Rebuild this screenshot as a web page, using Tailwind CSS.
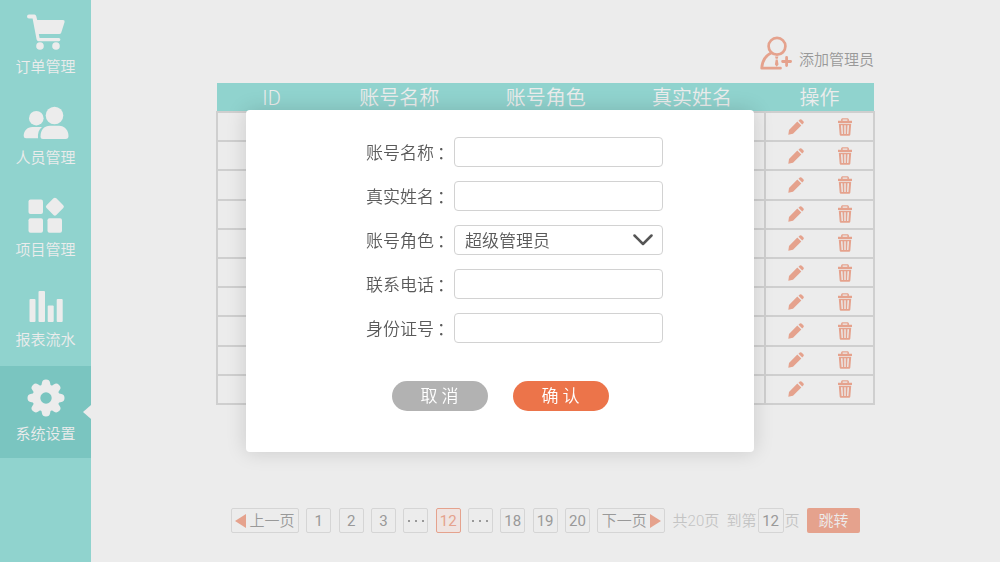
<!DOCTYPE html>
<html lang="zh-CN">
<head>
<meta charset="utf-8">
<meta name="viewport" content="width=device-width, initial-scale=1">
<title>系统设置</title>
<script src="https://cdn.jsdelivr.net/npm/@tailwindcss/browser@4"></script>
</head>
<body class="min-h-screen bg-[#ececec] font-['Roboto','Noto_Sans_CJK_SC',sans-serif] font-[350]">
<svg class="hidden" aria-hidden="true">
  <symbol id="pencil" viewBox="0 0 16 16">
    <path d="M.3 15.700 1 11 9.300 2.600 13.300 6.600 5 14.800zM10.500 1.800l1.300-1.200q1-.9 2 .1l1.500 1.500q1 1 .1 2L14.200 5.500z"/>
  </symbol>
  <symbol id="trash" viewBox="0 0 14 18">
    <path fill-rule="evenodd" d="M4 .3h6l.9.9v1.600H14v2.100H0V2.800h3.100V1.200zM4.600 1.600v1.200h4.800V1.600zM.8 5.700h12.400l-.9 11q-.1 1.100-1.200 1.100H2.900Q1.800 17.800 1.700 16.700zM3 7.300l.6 8.800h1.300l-.4-8.800zM6.300 7.300v8.800h1.400V7.300zM9.500 7.300 9.100 16.100h1.300l.6-8.800z"/>
  </symbol>
</svg>

<div class="flex min-h-screen">
  <aside class="w-[91px] shrink-0 bg-[#90d3ce] pt-[2px] text-[15px] leading-5 text-[#ececec]">
    <nav>
      <a href="#" class="flex h-[91px] flex-col items-center pt-[10px]">
        <svg class="h-10 w-10" viewBox="0 0 40 40" fill="currentColor" aria-hidden="true">
          <path fill-rule="evenodd" d="M3 2.500h5.500Q9.800 2.500 10.200 4l1 4H37q2 0 1.600 2L35.300 20.500q-.5 1.500-2 1.500H12.800l.8 4h19.200q1.600 0 1.600 1.600t-1.600 1.600H12.600Q11 29.200 10.600 27.500L6.600 6.500H3Q1 6.500 1 4.500t2-2z"/>
          <circle cx="14" cy="34" r="3.800"/><circle cx="30" cy="34" r="3.800"/>
        </svg>
        <span class="mt-[5px]">订单管理</span>
      </a>
      <a href="#" class="flex h-[91px] flex-col items-center pt-[12px]">
        <svg class="h-10 w-[46px]" viewBox="0 0 46 40" fill="currentColor" aria-hidden="true">
          <circle cx="31.500" cy="10.500" r="8.800"/>
          <path d="M17.500 31.500c0-7 4-10.800 9.500-10.800h9c5.500 0 9.500 4.800 9.500 10.300q0 3-3 3H20q-2.500 0-2.500-2.500z"/>
          <circle cx="13.300" cy="13.200" r="7.300"/>
          <path d="M9.500 22h9.500c-3 2.500-4.500 6-4 11.300H3q-2.300 0-2.300-2.300c0-5 3.300-9 8.800-9z"/>
        </svg>
        <span class="mt-[3px]">人员管理</span>
      </a>
      <a href="#" class="flex h-[91px] flex-col items-center pt-[12px]">
        <svg class="h-10 w-10" viewBox="0 0 40 40" fill="currentColor" aria-hidden="true">
          <rect x="2.500" y="3.500" width="14.500" height="14.500" rx="2"/>
          <rect x="2.500" y="22.200" width="14.500" height="14.500" rx="2"/>
          <rect x="21.500" y="22.200" width="14.500" height="14.500" rx="2"/>
          <rect x="22" y="3.800" width="13.800" height="13.800" rx="2" transform="rotate(45 28.900 10.700)"/>
        </svg>
        <span class="mt-[4px]">项目管理</span>
      </a>
      <a href="#" class="flex h-[91px] flex-col items-center pt-[10px]">
        <svg class="h-10 w-10" viewBox="0 0 40 40" fill="currentColor" aria-hidden="true">
          <rect x="3.500" y="14" width="6" height="23" rx="1"/>
          <rect x="12.500" y="6" width="6.500" height="31" rx="1"/>
          <rect x="21.700" y="20.500" width="6" height="16.500" rx="1"/>
          <rect x="30.700" y="14" width="6" height="23" rx="1"/>
        </svg>
        <span class="mt-[5px]">报表流水</span>
      </a>
      <a href="#" aria-current="page" class="relative flex h-[92px] flex-col items-center bg-[#7ac5c0] pt-[12px]">
        <svg class="h-10 w-10" viewBox="-20 -20 40 40" fill="currentColor" aria-hidden="true">
          <defs><mask id="hub"><rect x="-20" y="-20" width="40" height="40" fill="#fff"/><circle r="5.700" fill="#000"/></mask></defs>
          <g mask="url(#hub)">
            <circle r="13.500"/>
            <path id="tooth" d="M-5.500-11.500Q-4.200-13-4-15.500-3.600-18.500 0-18.500T4-15.500Q4.200-13 5.500-11.500V11.500Q4.200 13 4 15.500 3.600 18.500 0 18.500T-4 15.500Q-4.200 13-5.500 11.500z"/>
            <use href="#tooth" transform="rotate(45)"/><use href="#tooth" transform="rotate(90)"/><use href="#tooth" transform="rotate(135)"/>
          </g>
        </svg>
        <span class="mt-[6px]">系统设置</span>
        <svg class="absolute right-0 top-[39px] h-[14px] w-2" viewBox="0 0 8 14" aria-hidden="true"><path d="M8 0v14L0 7z" fill="#ececec"/></svg>
      </a>
    </nav>
  </aside>

  <main class="flex min-w-0 flex-1 flex-col px-[125px] pt-[35px] text-[#999]">
    <div class="flex h-12 items-start justify-end pr-px">
      <button type="button" class="flex items-start gap-[7px] text-[15px] leading-5">
        <svg class="h-9 w-8" viewBox="0 0 32 36" fill="none" stroke="#e5a28d" stroke-width="2.700" stroke-linecap="round" stroke-linejoin="round" aria-hidden="true">
          <circle cx="17" cy="11.300" r="8.400"/>
          <path d="M11.500 17.800C5.500 20.500 2.300 25.500 1.700 33.200H20.500"/>
          <path d="M26.600 22.500v8M22.600 26.500h8" stroke-width="2.800"/>
          <path d="M15 21.500h3.400l-.7 2.300h-2zM15.700 24.500h2l.8 5-1.800 2.200-1.800-2.200z" fill="#e5a28d" stroke="none"/>
        </svg>
        <span class="mt-[15px]">添加管理员</span>
      </button>
    </div>

    <table class="h-[322px] w-full table-fixed border-collapse">
      <colgroup><col class="w-[16.6%]"><col class="w-[22.300%]"><col class="w-[22.300%]"><col class="w-[22.200%]"><col class="w-[16.600%]"></colgroup>
      <thead>
        <tr class="h-[29px] bg-[#90d3ce] text-xl leading-6 text-[#ececec]">
          <th class="p-0 pt-[2px] font-[350]">ID</th><th class="p-0 pt-[2px] font-[350]">账号名称</th><th class="p-0 pt-[2px] font-[350]">账号角色</th><th class="p-0 pt-[2px] font-[350]">真实姓名</th><th class="p-0 pt-[2px] font-[350]">操作</th>
        </tr>
      </thead>
      <tbody id="rows"></tbody>
    </table>
    <template id="row">
      <tr>
        <td class="border-2 border-[#cfcfcf] p-0"></td><td class="border-2 border-[#cfcfcf] p-0"></td><td class="border-2 border-[#cfcfcf] p-0"></td><td class="border-2 border-[#cfcfcf] p-0"></td>
        <td class="border-2 border-[#cfcfcf] p-0">
          <div class="flex items-center justify-center gap-[34px] pl-[2px] text-[#e5a28d]">
            <button type="button" aria-label="编辑"><svg class="h-4 w-4" fill="currentColor"><use href="#pencil"/></svg></button>
            <button type="button" aria-label="删除"><svg class="h-[18px] w-[14px]" fill="currentColor"><use href="#trash"/></svg></button>
          </div>
        </td>
      </tr>
    </template>

    <nav aria-label="分页" class="mt-[103px] flex items-center justify-between px-[15px] text-[15px] leading-5">
      <button type="button" class="flex h-[25px] w-[68px] items-center justify-center gap-[3px] whitespace-nowrap rounded-xs border border-[#d5d5d5]"><svg class="h-[14px] w-[11px]" viewBox="0 0 11 14" aria-hidden="true"><path d="M11 0v14L0 7z" fill="#e5a28d"/></svg>上一页</button>
      <button type="button" class="h-[25px] w-[25px] rounded-xs border border-[#d5d5d5] font-normal">1</button>
      <button type="button" class="h-[25px] w-[25px] rounded-xs border border-[#d5d5d5] font-normal">2</button>
      <button type="button" class="h-[25px] w-[25px] rounded-xs border border-[#d5d5d5] font-normal">3</button>
      <button type="button" aria-label="更多页" class="flex h-[25px] w-[25px] items-center justify-center gap-[5px] rounded-xs border border-[#d5d5d5]"><i class="size-[2px] bg-[#999]"></i><i class="size-[2px] bg-[#999]"></i><i class="size-[2px] bg-[#999]"></i></button>
      <button type="button" aria-current="page" class="h-[25px] w-[25px] rounded-xs border border-[#e5a28d] bg-[#efe4e1] font-normal text-[#e5a28d]">12</button>
      <button type="button" aria-label="更多页" class="flex h-[25px] w-[25px] items-center justify-center gap-[5px] rounded-xs border border-[#d5d5d5]"><i class="size-[2px] bg-[#999]"></i><i class="size-[2px] bg-[#999]"></i><i class="size-[2px] bg-[#999]"></i></button>
      <button type="button" class="h-[25px] w-[25px] rounded-xs border border-[#d5d5d5] font-normal">18</button>
      <button type="button" class="h-[25px] w-[25px] rounded-xs border border-[#d5d5d5] font-normal">19</button>
      <button type="button" class="h-[25px] w-[25px] rounded-xs border border-[#d5d5d5] font-normal">20</button>
      <button type="button" class="flex h-[25px] w-[68px] items-center justify-center gap-[3px] whitespace-nowrap rounded-xs border border-[#d5d5d5]">下一页<svg class="h-[14px] w-[11px]" viewBox="0 0 11 14" aria-hidden="true"><path d="M0 0v14L11 7z" fill="#e5a28d"/></svg></button>
      <span class="whitespace-nowrap text-[#c4c4c4]">共20页</span>
      <label class="flex items-center gap-px whitespace-nowrap text-[#c4c4c4]">到第<input type="text" value="12" class="h-[25px] w-[26px] rounded-xs border border-[#d5d5d5] p-0 text-center font-normal text-[#999]">页</label>
      <button type="button" class="h-[25px] w-[53px] whitespace-nowrap rounded-xs bg-[#e5a28d] text-[#ececec]">跳转</button>
    </nav>
  </main>
</div>

<div class="fixed inset-0 flex items-center justify-center">
  <form role="dialog" aria-label="添加管理员" class="flex w-[508px] flex-col items-center rounded-sm bg-white pb-[41px] pt-[27px] text-[17px] leading-6 text-[#5a5a5a] shadow-[0_0_20px_rgba(0,0,0,0.15)]">
    <div class="mr-[-29px] grid grid-cols-[88px_209px] items-center gap-y-[14px] self-center">
      <label for="account" class="flex gap-[3px] whitespace-nowrap pt-[2px]"><span>账号名称</span><span>：</span></label>
      <input id="account" type="text" class="h-[30px] rounded-sm border border-[#d2d2d2] bg-white px-[10px]">
      <label for="name" class="flex gap-[3px] whitespace-nowrap pt-[2px]"><span>真实姓名</span><span>：</span></label>
      <input id="name" type="text" class="h-[30px] rounded-sm border border-[#d2d2d2] bg-white px-[10px]">
      <label for="role" class="flex gap-[3px] whitespace-nowrap pt-[2px]"><span>账号角色</span><span>：</span></label>
      <div class="relative">
        <select id="role" class="block h-[30px] w-full appearance-none rounded-sm border border-[#d2d2d2] bg-white px-[10px] pt-[2px]"><option>超级管理员</option></select>
        <svg class="pointer-events-none absolute right-[10px] top-[9px] h-3 w-5" viewBox="0 0 20 12" fill="none" stroke="#555" stroke-width="2.500" stroke-linecap="round" stroke-linejoin="round" aria-hidden="true"><path d="M1.500 1.500 10 10l8.500-8.500"/></svg>
      </div>
      <label for="phone" class="flex gap-[3px] whitespace-nowrap pt-[2px]"><span>联系电话</span><span>：</span></label>
      <input id="phone" type="tel" class="h-[30px] rounded-sm border border-[#d2d2d2] bg-white px-[10px]">
      <label for="idno" class="flex gap-[3px] whitespace-nowrap pt-[2px]"><span>身份证号</span><span>：</span></label>
      <input id="idno" type="text" class="h-[30px] rounded-sm border border-[#d2d2d2] bg-white px-[10px]">
    </div>
    <div class="mt-[38px] flex gap-[25px] text-white">
      <button type="button" class="h-[30px] w-24 rounded-full bg-[#b2b2b2]">取 消</button>
      <button type="submit" class="h-[30px] w-24 rounded-full bg-[#ec744a]">确 认</button>
    </div>
  </form>
</div>

<script>
  const body = document.getElementById('rows');
  const row = document.getElementById('row');
  for (let i = 0; i < 10; i++) body.append(row.content.cloneNode(true));
</script>
</body>
</html>
